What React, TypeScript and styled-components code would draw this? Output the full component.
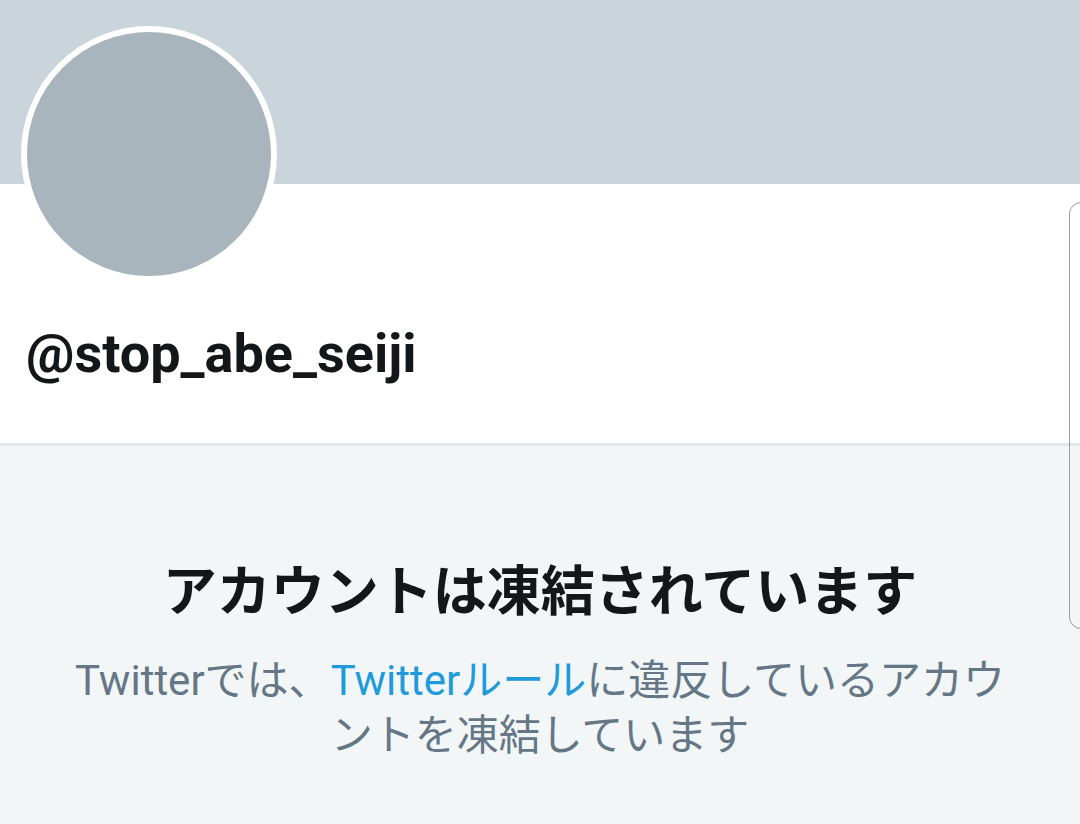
import React from "react";
import styled, { createGlobalStyle } from "styled-components";

const Global = createGlobalStyle`
  html, body { margin: 0; padding: 0; height: 100%; overflow: hidden; }
  body { background: #f2f6f7; font-family: Roboto, "Noto Sans CJK JP", sans-serif; }
  #root { min-height: 100%; }
`;

const Page = styled.div`
  position: relative;
  width: 1080px;
  height: 824px;
  display: flex;
  flex-direction: column;
  background: #f2f6f7;
`;

const Banner = styled.div`
  height: 184px;
  flex: none;
  background: #cad5db;
`;

const ProfileHeader = styled.header`
  height: 259px;
  flex: none;
  background: #ffffff;
  border-bottom: 3px solid #e1e8ed;
  padding-left: 21px;
  display: flex;
  flex-direction: column;
  align-items: flex-start;
`;

const Avatar = styled.div`
  width: 244px;
  height: 244px;
  margin-top: -158px;
  border: 6px solid #ffffff;
  border-radius: 50%;
  background: #a8b5bd;
`;

const Handle = styled.h1`
  margin: 40px 0 0 5px;
  font-family: Roboto, "Noto Sans", sans-serif;
  font-weight: 700;
  font-size: 54px;
  line-height: 64px;
  color: #14171a;
`;

const Suspended = styled.section`
  flex: 1;
  display: flex;
  flex-direction: column;
  align-items: center;
  padding-top: 107px;
  text-align: center;
`;

const Title = styled.h2`
  margin: 0;
  font-family: "Noto Sans CJK JP", sans-serif;
  font-weight: 700;
  font-size: 54px;
  line-height: 70px;
  color: #14171a;
`;

const Body = styled.p`
  margin: 30px 0 0;
  max-width: 945px;
  font-family: Roboto, "Noto Sans CJK JP", sans-serif;
  font-weight: 400;
  font-size: 42px;
  line-height: 55px;
  color: #657786;
`;

const Link = styled.a`
  color: #1f9bdb;
  text-decoration: none;
`;

const EdgePanel = styled.div`
  position: absolute;
  left: 1069px;
  top: 202px;
  width: 40px;
  height: 425px;
  border: 1.5px solid #9a9a9a;
  border-radius: 12px;
  pointer-events: none;
`;

export default function App() {
  return (
    <>
      <Global />
      <Page>
        <Banner />
        <ProfileHeader>
          <Avatar />
          <Handle>@stop_abe_seiji</Handle>
        </ProfileHeader>
        <Suspended>
          <Title>アカウントは凍結されています</Title>
          <Body>
            Twitterでは、<Link href="#">Twitterルール</Link>に違反しているアカウントを凍結しています
          </Body>
        </Suspended>
        <EdgePanel />
      </Page>
    </>
  );
}
